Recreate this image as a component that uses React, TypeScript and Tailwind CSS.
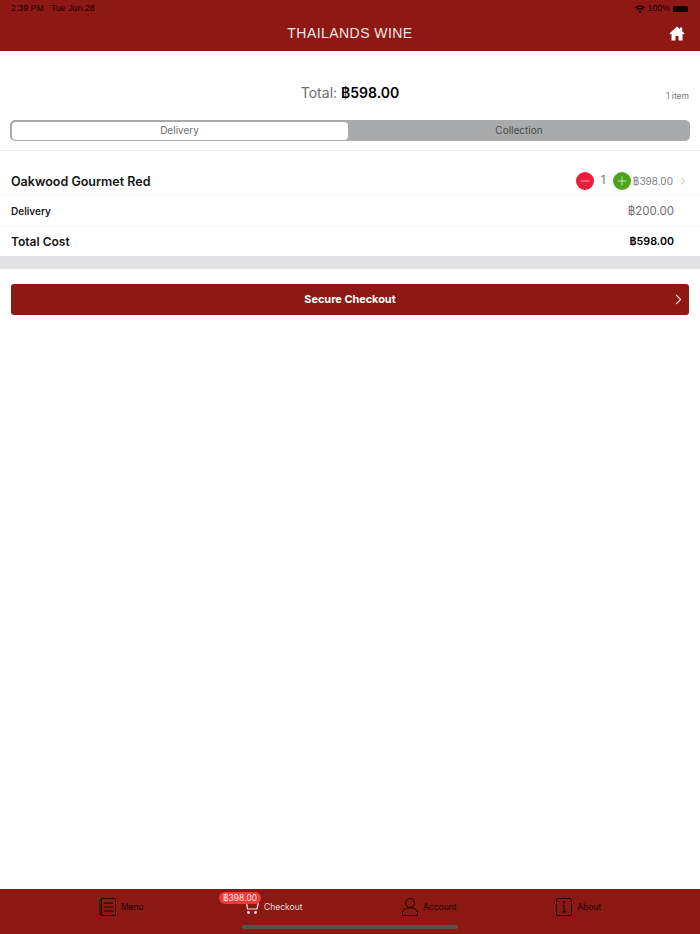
import { ChevronRight, Minus, Plus } from "lucide-react";

const font = "font-['Inter','Noto_Sans',sans-serif]";

function MenuIcon() {
  return (
    <svg width="17" height="18" viewBox="0 0 17 18" fill="none" stroke="#1c0505" strokeWidth="1">
      <rect x="2.5" y="0.5" width="14" height="17" rx="1" />
      <path d="M2.5 1 1 2v14.5l1.500 1M5 5h9M5 9h9M5 13h9" />
    </svg>
  );
}

function CartIcon() {
  return (
    <svg width="14" height="14" viewBox="0 0 14 14" fill="none" stroke="#f3e3e3" strokeWidth="1.2">
      <path d="M0.500 2h13l-1.500 7H2.500L1.500 2" />
      <circle cx="3.500" cy="12.500" r="0.800" fill="#f3e3e3" />
      <circle cx="10.500" cy="12.500" r="0.800" fill="#f3e3e3" />
    </svg>
  );
}

function AccountIcon() {
  return (
    <svg width="16" height="18" viewBox="0 0 16 18" fill="none" stroke="#1c0505" strokeWidth="1">
      <ellipse cx="8" cy="5" rx="4.500" ry="4.500" />
      <path d="M0.500 17.500v-3c0-2.500 2.500-4 4.500-4.500h6c2 .5 4.500 2 4.500 4.500v3z" />
    </svg>
  );
}

function AboutIcon() {
  return (
    <svg width="16" height="18" viewBox="0 0 16 18" fill="none" stroke="#1c0505" strokeWidth="1">
      <rect x="0.500" y="0.500" width="15" height="17" rx="1.500" />
      <path d="M6.500 7.500H8.200V14M6 14h4.500M7.500 3.500h1.200v1.500H7.500z" />
    </svg>
  );
}

function Tab({ icon, label, light }: { icon: React.ReactNode; label: string; light?: boolean }) {
  return (
    <div className="flex items-center justify-center gap-[5px]">
      {icon}
      <span className={`text-[8.5px] ${light ? "text-[#f0dcdc]" : "text-[#1c0505]"}`}>{label}</span>
    </div>
  );
}

export default function App() {
  return (
    <div className={`${font} flex h-[934px] w-[700px] flex-col bg-white text-black`}>
      {/* header */}
      <div className="flex h-[51px] shrink-0 flex-col bg-[#8e1813] px-[11px]">
        <div className="flex h-[17px] items-center justify-between font-['Liberation_Sans',sans-serif] text-[8.8px] text-[#140202]">
          <span>2:39 PM&nbsp;&nbsp; Tue Jun 28</span>
          <div className="flex items-center gap-[3px] pr-[1px]">
            <svg width="10" height="8" viewBox="0 0 10 8" fill="#140202">
              <path d="M5 8 3.400 6.200a2.300 2.300 0 0 1 3.200 0zM2.600 5.300 1.500 4.100a5 5 0 0 1 7 0L7.400 5.300a3.500 3.500 0 0 0-4.800 0zM0.800 3.400 0 2.500a7.200 7.200 0 0 1 10 0l-.8.900a6 6 0 0 0-8.400 0z" />
            </svg>
            <span>100%</span>
            <div className="h-[6px] w-[15px] rounded-[1.500px] bg-[#140202]" />
          </div>
        </div>
        <div className="relative flex flex-1 items-center justify-center pb-[2px]">
          <span className="font-['Liberation_Sans',sans-serif] text-[14px] tracking-[0.45px] text-[#f6e6e6]">THAILANDS WINE</span>
          <svg className="absolute right-[4px] top-[9px]" width="16" height="15" viewBox="0 0 16 15" fill="white">
            <path d="M8 0.500 0.500 7.500 1.500 8.500 2.500 7.700V14.500H6.500V10H9.500V14.500H13.500V7.700L14.500 8.500 15.500 7.500 13.200 5.300V1.500H11V3.300z" />
          </svg>
        </div>
      </div>

      {/* total */}
      <div className="relative mt-[31px] flex h-[20px] items-center justify-center">
        <span className="text-[14px] text-[#6e6e6e]">
          Total: <span className="font-semibold text-black">฿598.00</span>
        </span>
        <span className="absolute right-[11px] top-[8px] text-[8.500px] text-[#777]">1 item</span>
      </div>

      {/* delivery / collection */}
      <div className="mx-[10px] mt-[18px] flex h-[21px] rounded-[5px] bg-[#a9aaab] p-[1.500px] text-[10px]">
        <div className="flex w-[336px] items-center justify-center rounded-[4px] bg-white text-[#6e6e6e]">Delivery</div>
        <div className="flex flex-1 items-center justify-center pl-[2px] text-[#4a4a4a]">Collection</div>
      </div>

      <div className="mt-[9px] h-px bg-[#f1f1f1]" />

      {/* lines */}
      <div className="flex h-[45px] items-center justify-between border-b border-[#f3f3f3] pl-[11px] pr-[11px] pt-[16px]">
        <span className="mt-[2px] text-[12.500px] font-semibold text-[#141414]">Oakwood Gourmet Red</span>
        <div className="flex items-center">
          <div className="flex h-[18px] w-[18px] items-center justify-center rounded-full bg-[#ec1c3c]">
            <Minus size={14} color="#f5b6c0" strokeWidth={1.500} />
          </div>
          <span className="ml-[7px] w-[11px] text-[11.500px] text-[#777]">1</span>
          <div className="ml-[1px] flex h-[18px] w-[18px] items-center justify-center rounded-full bg-[#4aa51c]">
            <Plus size={14} color="#d6edc8" strokeWidth={1.500} />
          </div>
          <span className="ml-[2px] text-[10px] text-[#808080]">฿398.00</span>
          <ChevronRight className="ml-[4px]" size={12} color="#a8a8a8" strokeWidth={1.500} />
        </div>
      </div>
      <div className="flex h-[30px] items-center justify-between border-b border-[#f3f3f3] pl-[11px] pr-[26px] pt-[2px]">
        <span className="text-[10px] font-semibold text-[#1c1c1c]">Delivery</span>
        <span className="text-[11.500px] text-[#707070]">฿200.00</span>
      </div>
      <div className="flex h-[30px] items-center justify-between pl-[11px] pr-[26px] pt-[2px]">
        <span className="text-[12px] font-semibold text-[#141414]">Total Cost</span>
        <span className="text-[10.700px] font-semibold text-black">฿598.00</span>
      </div>

      <div className="h-[13px] bg-[#e2e2e4]" />

      {/* checkout */}
      <div className="relative mx-[11px] mt-[15px] flex h-[31px] items-center justify-center rounded-[3px] bg-[#8e1813]">
        <span className="text-[10.900px] font-bold text-white">Secure Checkout</span>
        <ChevronRight className="absolute right-[2px]" size={17} color="#f3dede" strokeWidth={1.500} />
      </div>

      <div className="flex-1" />

      {/* tab bar */}
      <div className="relative grid h-[45px] shrink-0 grid-cols-4 items-center bg-[#8b1813] px-[45px] pb-[9px]">
        <Tab icon={<MenuIcon />} label="Menu" />
        <Tab icon={<CartIcon />} label="Checkout" light />
        <div className="pl-[6px]"><Tab icon={<AccountIcon />} label="Account" /></div>
        <Tab icon={<AboutIcon />} label="About" />
        <span className="absolute left-[219px] top-[3px] flex h-[12px] items-center rounded-full bg-[#f03a36] px-[4px] text-[8.500px] text-[#fde6e6]">฿398.00</span>
        <div className="absolute bottom-[5px] left-[242px] h-[4px] w-[216px] rounded-full bg-[#5a5050]" />
      </div>
    </div>
  );
}
